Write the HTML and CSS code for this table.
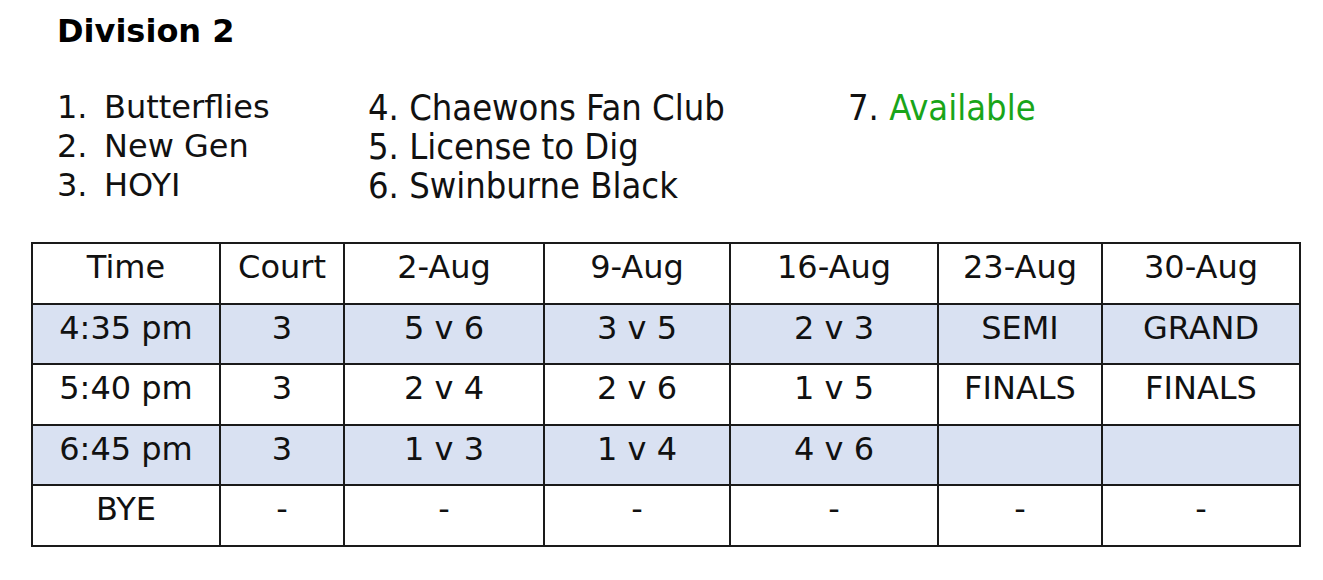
FILE: index.html
```html
<!DOCTYPE html>
<html>
<head>
<meta charset="utf-8">
<link rel="stylesheet" href="styles.css">
</head>
<body>
<div class="page">
  <h1 class="title">Division 2</h1>
  <div class="teams">
    <div class="team-col col-a">
      <div class="item"><span class="num">1.</span><span>Butterflies</span></div>
      <div class="item"><span class="num">2.</span><span>New Gen</span></div>
      <div class="item"><span class="num">3.</span><span>HOYI</span></div>
    </div>
    <div class="team-col col-b">
      <div class="item">4. Chaewons Fan Club</div>
      <div class="item">5. License to Dig</div>
      <div class="item">6. Swinburne Black</div>
    </div>
    <div class="team-col col-c">
      <div class="item">7. <span class="avail">Available</span></div>
    </div>
  </div>
  <table class="sched">
    <colgroup>
      <col class="w1"><col class="w2"><col class="w3"><col class="w4"><col class="w5"><col class="w6"><col class="w7">
    </colgroup>
    <tr><td>Time</td><td>Court</td><td>2-Aug</td><td>9-Aug</td><td>16-Aug</td><td>23-Aug</td><td>30-Aug</td></tr>
    <tr class="shade"><td>4:35 pm</td><td>3</td><td>5 v 6</td><td>3 v 5</td><td>2 v 3</td><td>SEMI</td><td>GRAND</td></tr>
    <tr><td>5:40 pm</td><td>3</td><td>2 v 4</td><td>2 v 6</td><td>1 v 5</td><td>FINALS</td><td>FINALS</td></tr>
    <tr class="shade"><td>6:45 pm</td><td>3</td><td>1 v 3</td><td>1 v 4</td><td>4 v 6</td><td></td><td></td></tr>
    <tr><td>BYE</td><td>-</td><td>-</td><td>-</td><td>-</td><td>-</td><td>-</td></tr>
  </table>
</div>
</body>
</html>
```

FILE: styles.css
```css
html, body {
  margin: 0;
  padding: 0;
  background: #ffffff;
}
body {
  font-family: "DejaVu Sans", Verdana, sans-serif;
  color: #111111;
}
.page {
  padding: 12px 0 0 31px;
}
.title {
  margin: 0 0 0 26px;
  font-size: 32px;
  line-height: 38px;
  font-weight: bold;
  color: #000;
}
.teams {
  display: flex;
  margin: 38px 0 0 26px;
}
.team-col .item {
  line-height: 39px;
  height: 39px;
  white-space: nowrap;
}
.col-a {
  width: 311px;
  font-size: 32px;
}
.col-a .num {
  display: inline-block;
  width: 47px;
}
.col-b {
  width: 480px;
  font-family: "DejaVu Sans Condensed", "DejaVu Sans", sans-serif;
  font-stretch: condensed;
  font-size: 36px;
}
.col-c {
  font-family: "DejaVu Sans Condensed", "DejaVu Sans", sans-serif;
  font-stretch: condensed;
  font-size: 36px;
}
.avail {
  color: #19a519;
}
.sched {
  margin-top: 37px;
  border-collapse: collapse;
  table-layout: fixed;
  width: 1268px;
  font-size: 32px;
}
.w1 { width: 188px; }
.w2 { width: 124px; }
.w3 { width: 200px; }
.w4 { width: 186px; }
.w5 { width: 208px; }
.w6 { width: 164px; }
.w7 { width: 198px; }
.sched td {
  border: 2px solid #1a1a1a;
  text-align: center;
  vertical-align: top;
  padding: 4px 0 0;
  height: 54.6px;
  line-height: 38px;
  white-space: nowrap;
}
.shade td {
  background: #d9e1f2;
}
```
